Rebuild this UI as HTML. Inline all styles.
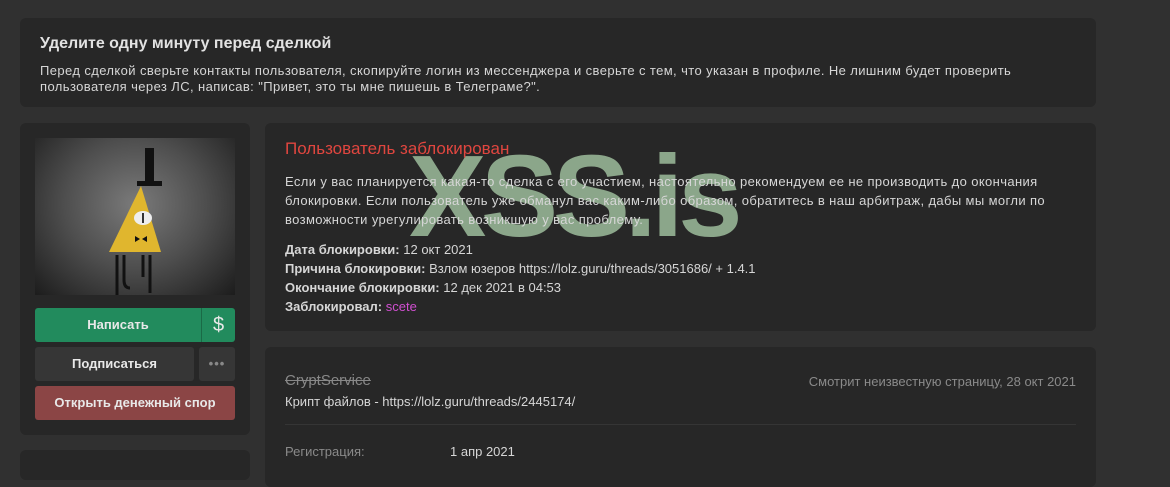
<!DOCTYPE html>
<html><head><meta charset="utf-8"><style>
*{box-sizing:border-box;margin:0;padding:0}
body{width:1170px;height:468px;overflow:hidden;background:#303030;font-family:"Liberation Sans",sans-serif;color:#d6d6d6;position:relative}
.p{position:absolute;background:#272727;border-radius:6px}
.b{font-weight:bold}
.btn{position:absolute;border-radius:3px;font-size:13px;font-weight:bold;color:#e8e8e8;text-align:center;line-height:34px}
.t{z-index:5}
</style></head><body>
<div class="p" style="left:20px;top:18px;width:1076px;height:89px">
<div style="position:absolute;left:20px;top:17px;font-size:16px;font-weight:bold;color:#e2e2e2">Уделите одну минуту перед сделкой</div>
<div style="position:absolute;left:20px;top:45px;width:1040px;font-size:13px;line-height:16px;color:#d6d6d6;letter-spacing:0.4px;white-space:nowrap">Перед сделкой сверьте контакты пользователя, скопируйте логин из мессенджера и сверьте с тем, что указан в профиле. Не лишним будет проверить<br>пользователя через ЛС, написав: "Привет, это ты мне пишешь в Телеграме?".</div>
</div>
<div class="p" style="left:20px;top:123px;width:230px;height:312px">
<div style="position:absolute;left:15px;top:15px;width:200px;height:157px;background:radial-gradient(ellipse at 50% 42%,#7a7a7a 0%,#4e4e4e 50%,#1c1c1c 100%)">
<svg width="200" height="157" viewBox="0 0 200 157">
<rect x="110" y="10" width="9" height="35" fill="#111"/><rect x="102" y="43" width="25" height="5" fill="#111"/>
<polygon points="106,48 74,114 126,114" fill="#e0b62e"/>
<ellipse cx="108" cy="80" rx="9" ry="7" fill="#eee"/><rect x="107" y="75" width="2" height="10" fill="#333"/>
<path d="M100 98l5 3-5 3zM112 98l-5 3 5 3z" fill="#111"/>
<path d="M82 117v40M89 117v25q0 8 6 8M108 117v22M115 117v38" stroke="#111" stroke-width="3" fill="none"/>
</svg></div>
<div class="btn" style="left:15px;top:185px;width:200px;background:#228b5d"><div style="width:166px">Написать</div><div style="position:absolute;right:0;top:0;width:34px;height:34px;border-left:1px solid #1a6a46;font-size:20px;font-weight:normal">$</div></div>
<div class="btn" style="left:15px;top:224px;width:159px;background:#363636">Подписаться</div>
<div class="btn" style="left:179px;top:224px;width:36px;background:#363636;color:#888;letter-spacing:1px">•••</div>
<div class="btn" style="left:15px;top:263px;width:200px;background:#8b4545">Открыть денежный спор</div>
</div>
<div class="p" style="left:20px;top:450px;width:230px;height:30px"></div>
<div class="p" style="left:265px;top:347px;width:831px;height:140px">
<div style="position:absolute;left:20px;top:25px;font-size:15px;color:#888;text-decoration:line-through">CryptService</div>
<div style="position:absolute;right:20px;top:27px;font-size:13px;color:#8a8a8a">Смотрит неизвестную страницу, 28 окт 2021</div>
<div style="position:absolute;left:20px;top:47px;font-size:13px">Крипт файлов - https://lolz.guru/threads/2445174/</div>
<div style="position:absolute;left:20px;top:77px;width:791px;border-top:1px solid #353535"></div>
<div style="position:absolute;left:20px;top:97px;font-size:13px;color:#8a8a8a">Регистрация:</div>
<div style="position:absolute;left:185px;top:97px;font-size:13px">1 апр 2021</div>
</div>
<div class="p" style="left:265px;top:123px;width:831px;height:208px"></div>
<div style="position:absolute;left:409px;top:138px;font-size:116px;font-weight:bold;color:#8ba68a;letter-spacing:-5.5px;line-height:116px;z-index:2">XSS.is</div>
<div class="t" style="position:absolute;left:285px;top:139px;font-size:17px;color:#e0463f">Пользователь заблокирован</div>
<div class="t" style="position:absolute;left:285px;top:172px;font-size:13px;line-height:19px;letter-spacing:0.38px;white-space:nowrap">Если у вас планируется какая-то сделка с его участием, настоятельно рекомендуем ее не производить до окончания<br>блокировки. Если пользователь уже обманул вас каким-либо образом, обратитесь в наш арбитраж, дабы мы могли по<br>возможности урегулировать возникшую у вас проблему.</div>
<div class="t" style="position:absolute;left:285px;top:240px;font-size:13px;line-height:19px"><span class="b">Дата блокировки:</span> 12 окт 2021<br><span class="b">Причина блокировки:</span> Взлом юзеров https://lolz.guru/threads/3051686/ + 1.4.1<br><span class="b">Окончание блокировки:</span> 12 дек 2021 в 04:53<br><span class="b">Заблокировал:</span> <span style="color:#d04fd0">scete</span></div>
</body></html>
